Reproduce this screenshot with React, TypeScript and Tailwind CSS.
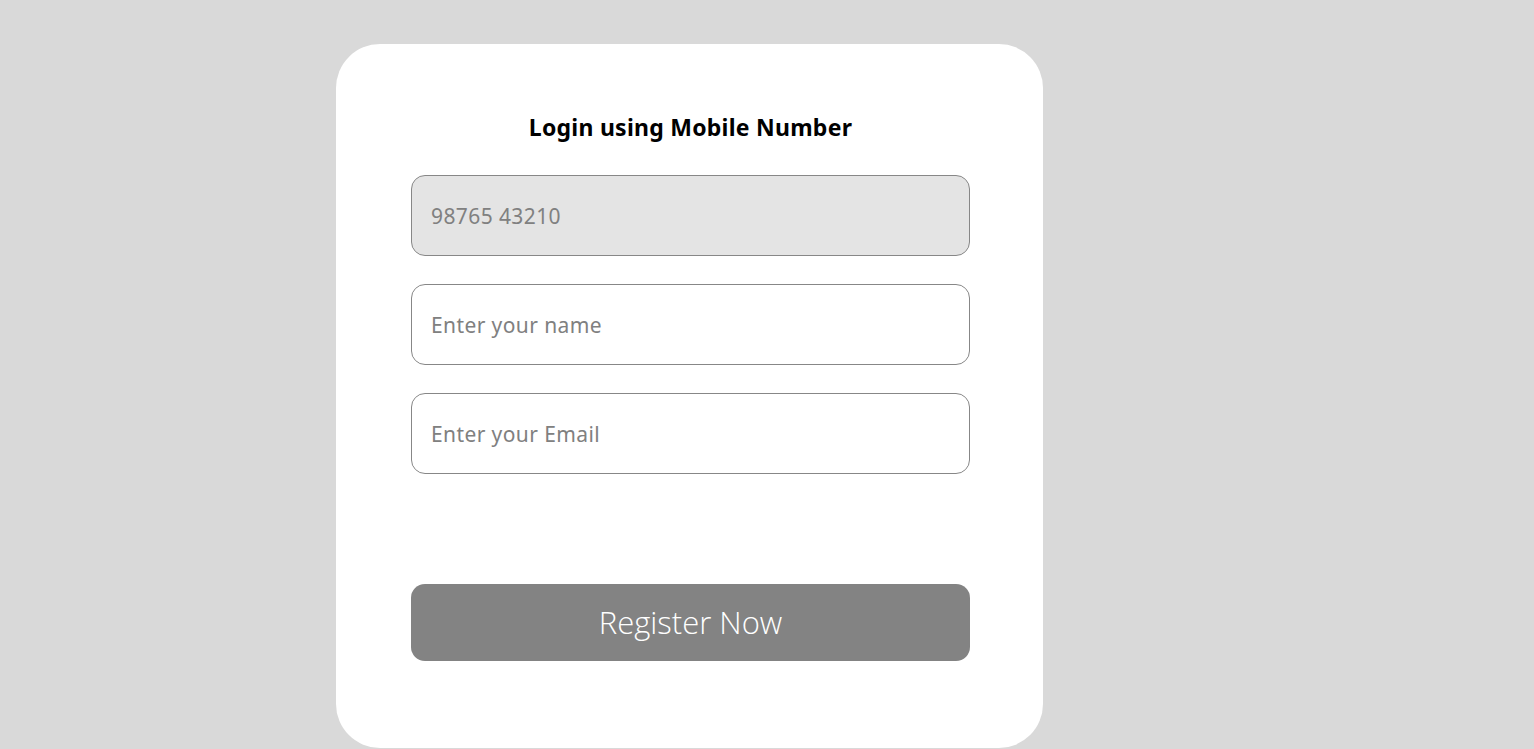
import React from "react";

export default function App() {
  const inputCls =
    "h-[81px] w-[559px] rounded-[14px] border border-[#878787] px-[19px] text-[21px] tracking-[0.4px] text-[#808080] placeholder-[#808080] outline-none";
  return (
    <div className="min-h-[749px] w-full bg-[#d9d9d9] pt-[44px] pl-[336px]" style={{ fontFamily: '"Noto Sans", "Open Sans", sans-serif' }}>
      <div className="flex h-[704px] w-[707px] flex-col rounded-[44px] bg-white pl-[75px]">
        <h1 className="mt-[70px] w-[559px] text-center text-[23px] font-bold leading-[26px] tracking-[0.25px] text-black" style={{ fontFamily: '"Noto Sans", sans-serif' }}>
          Login using Mobile Number
        </h1>
        <div className="mt-[35px] flex flex-col gap-[28px]">
          <input readOnly placeholder="98765 43210" className={`${inputCls} bg-[#e4e4e4]`} />
          <input placeholder="Enter your name" className={`${inputCls} bg-white`} />
          <input placeholder="Enter your Email" className={`${inputCls} bg-white`} />
        </div>
        <button
          className="mt-[110px] h-[77px] w-[559px] rounded-[14px] bg-[#838383] text-[31px] font-light text-white"
          style={{ fontFamily: '"Open Sans", sans-serif' }}
        >
          Register Now
        </button>
      </div>
    </div>
  );
}
